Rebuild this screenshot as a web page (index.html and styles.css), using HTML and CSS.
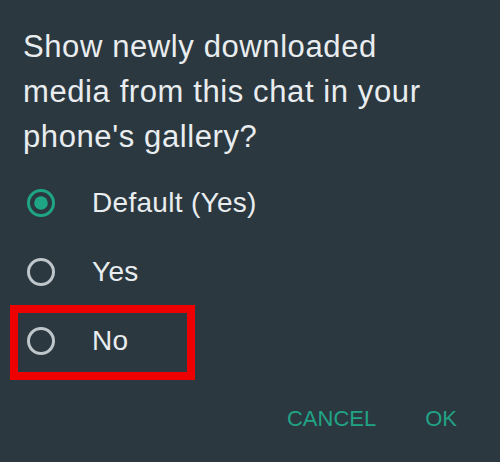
FILE: index.html
```html
<!DOCTYPE html>
<html lang="en">
<head>
<meta charset="utf-8">
<title>Media visibility</title>
<link rel="stylesheet" href="styles.css">
</head>
<body>
<div class="dialog">
  <p class="title">Show newly downloaded media from this chat in your phone's gallery?</p>
  <ul class="options">
    <li class="option">
      <svg class="radio" viewBox="0 0 28 28" width="28" height="28" aria-hidden="true">
        <circle cx="14" cy="14" r="12.5" fill="none" stroke="#1fa586" stroke-width="3"/>
        <circle cx="14" cy="14" r="6.8" fill="#1fa586"/>
      </svg>
      <span class="label">Default (Yes)</span>
    </li>
    <li class="option">
      <svg class="radio" viewBox="0 0 28 28" width="28" height="28" aria-hidden="true">
        <circle cx="14" cy="14" r="12.5" fill="none" stroke="#bfc6ca" stroke-width="3"/>
      </svg>
      <span class="label">Yes</span>
    </li>
    <li class="option">
      <svg class="radio" viewBox="0 0 28 28" width="28" height="28" aria-hidden="true">
        <circle cx="14" cy="14" r="12.5" fill="none" stroke="#bfc6ca" stroke-width="3"/>
      </svg>
      <span class="label">No</span>
    </li>
  </ul>
  <div class="actions">
    <span class="btn">CANCEL</span>
    <span class="btn">OK</span>
  </div>
  <div class="highlight"></div>
</div>
</body>
</html>
```
FILE: styles.css
```css
html, body {
  margin: 0;
  padding: 0;
}
body {
  background: #2b3840;
  font-family: "Liberation Sans", Arial, sans-serif;
  width: 500px;
  height: 462px;
  overflow: hidden;
}
.dialog {
  position: relative;
  padding: 24px 43px 0 23px;
  height: 462px;
  box-sizing: border-box;
}
.title {
  margin: 0;
  max-width: 420px;
  font-size: 31px;
  line-height: 45px;
  letter-spacing: 0.6px;
  color: #e9edef;
}
.options {
  list-style: none;
  margin: 9px 0 0 0;
  padding: 0;
}
.option {
  display: flex;
  align-items: center;
  height: 69px;
  padding-left: 4px;
}
.radio {
  flex: none;
  display: block;
}
.label {
  margin-left: 37px;
  font-size: 28px;
  line-height: 32px;
  letter-spacing: 0.3px;
  color: #e9edef;
}
.actions {
  display: flex;
  justify-content: flex-end;
  gap: 49px;
  margin-top: 31px;
}
.btn {
  font-size: 22px;
  line-height: 26px;
  color: #21a386;
}
.highlight {
  position: absolute;
  left: 10px;
  top: 305px;
  width: 185px;
  height: 75px;
  border: 8px solid #ee0000;
  box-sizing: border-box;
}
```
